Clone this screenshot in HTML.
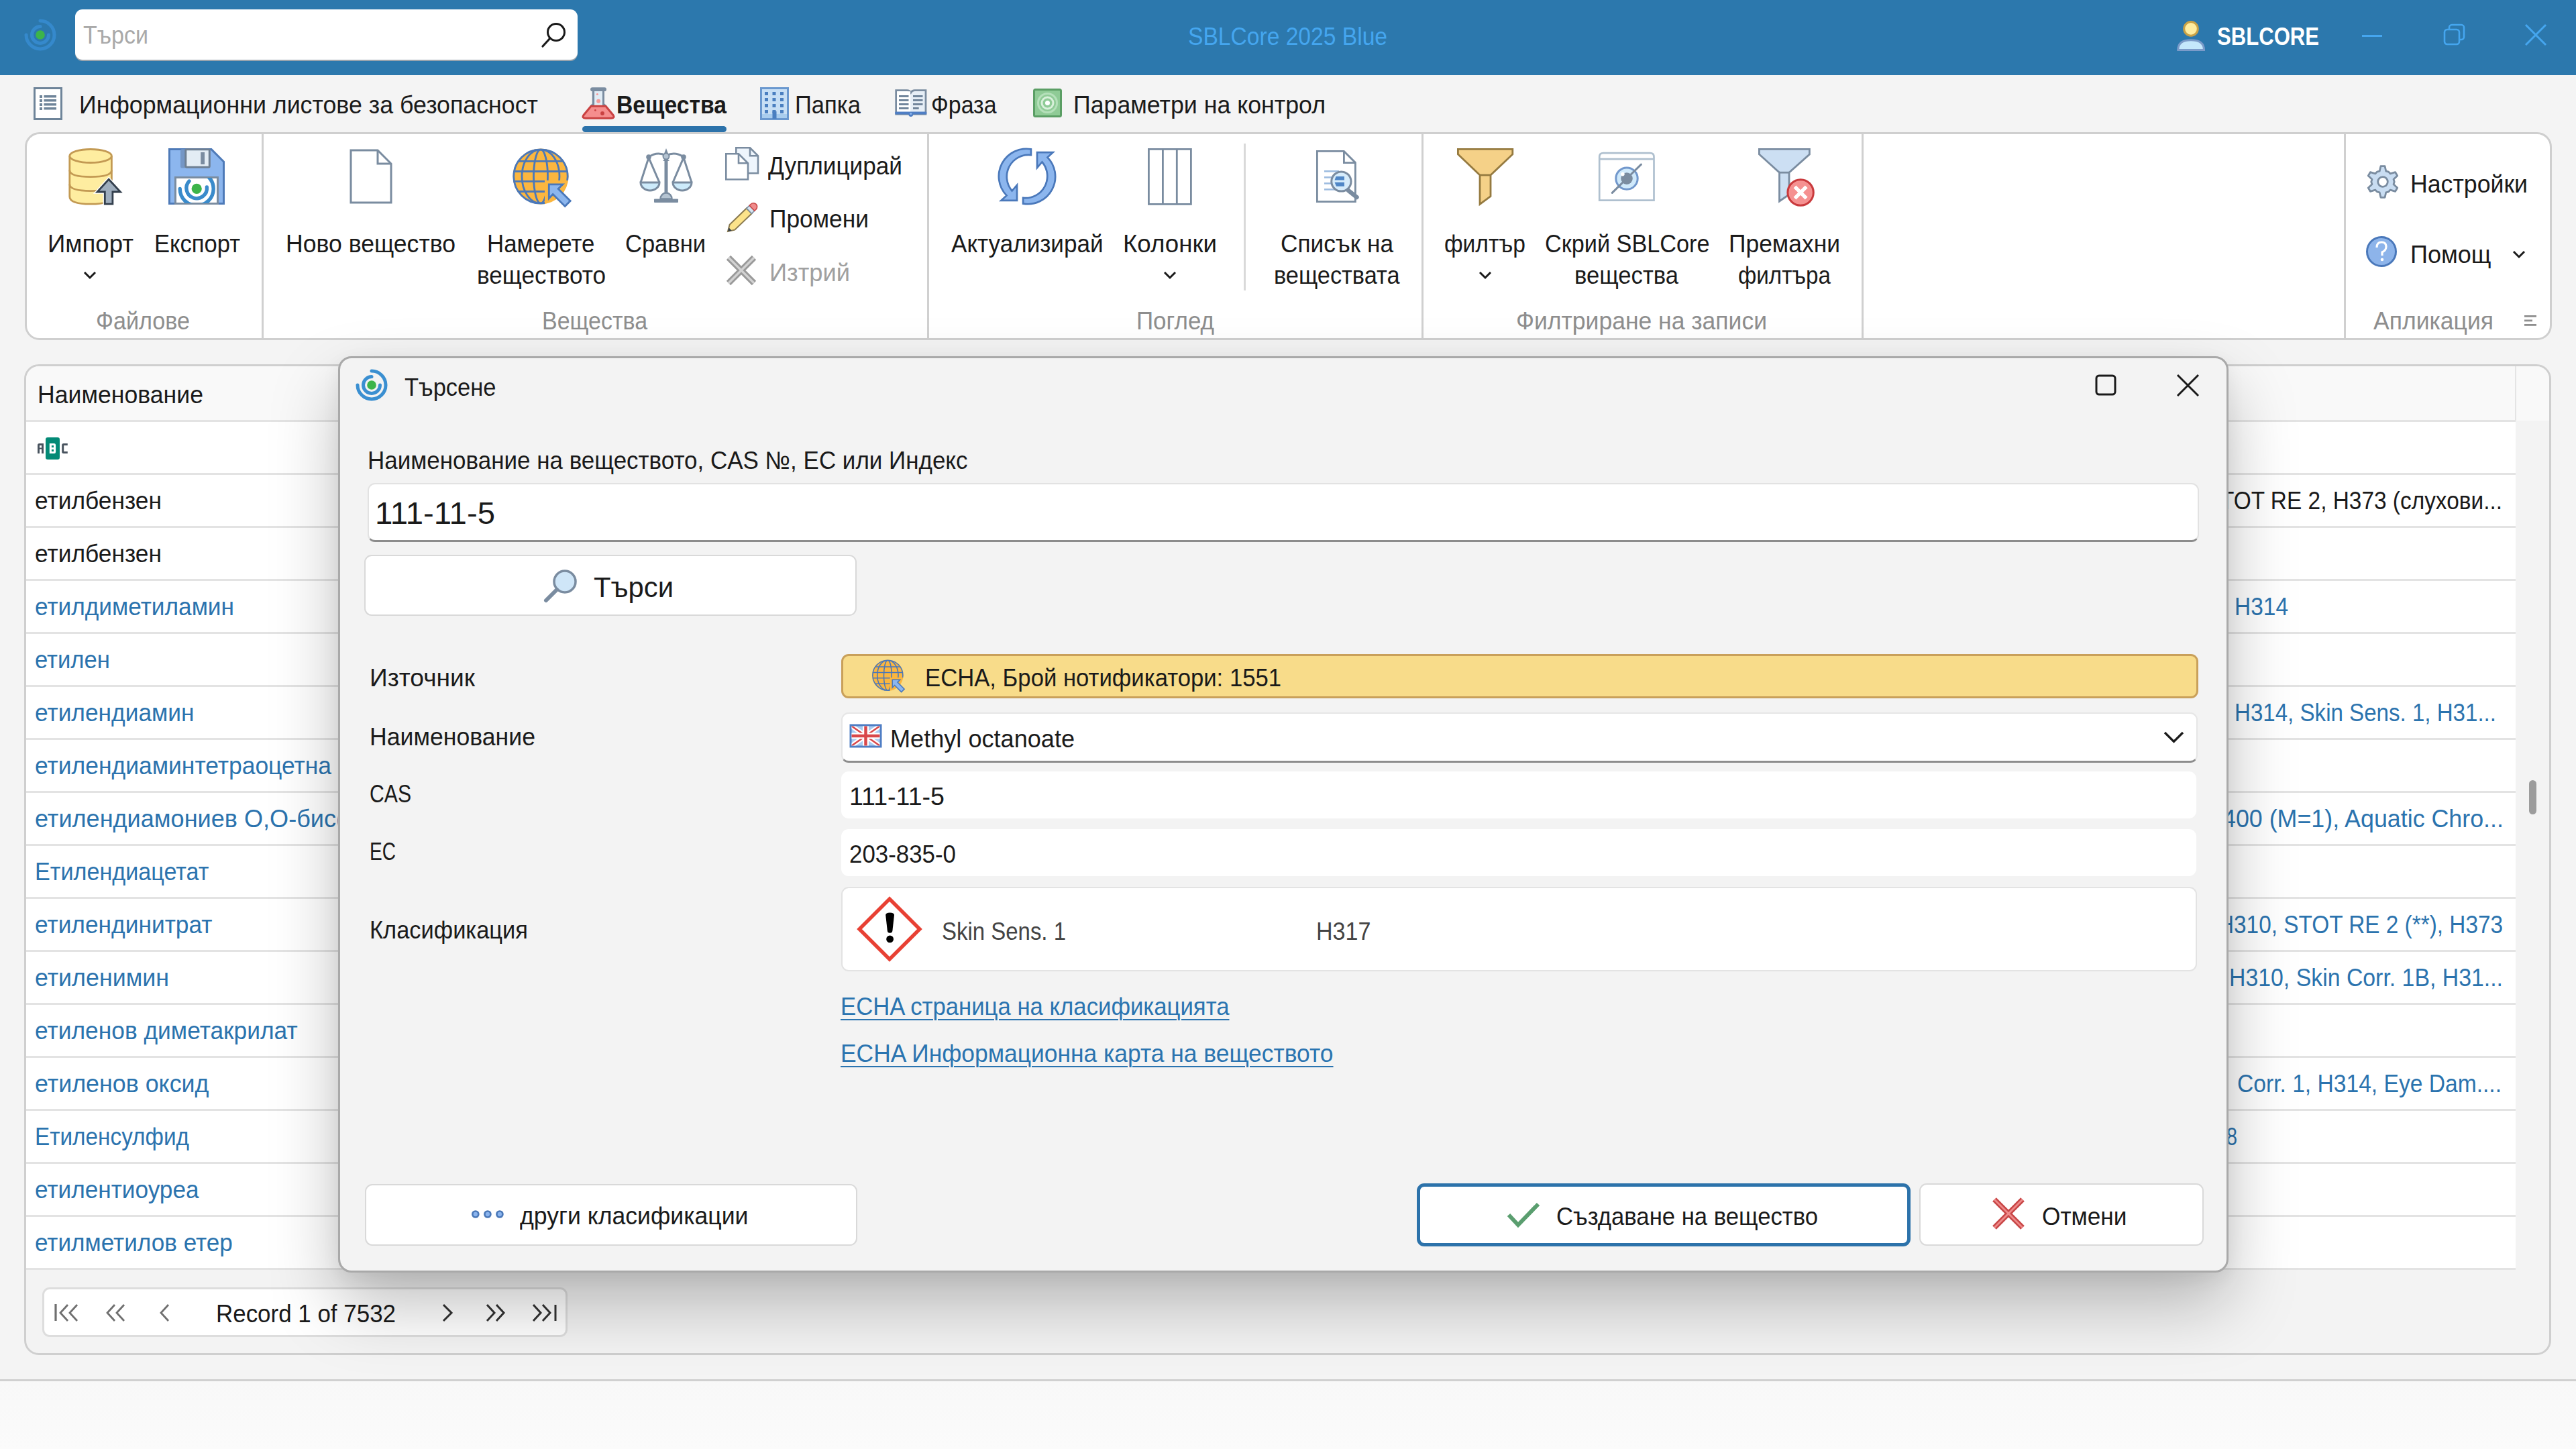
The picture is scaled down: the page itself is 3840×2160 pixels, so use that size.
<!DOCTYPE html>
<html><head><meta charset="utf-8"><style>
html,body{margin:0;padding:0;width:3840px;height:2160px;overflow:hidden;background:#F4F4F4;font-family:"Liberation Sans", sans-serif;}
svg{overflow:visible}
</style></head><body>
<div style="position:absolute;left:0;top:0;width:3840px;height:112px;background:#2C78AD"></div><svg style="position:absolute;left:35.0px;top:27.0px" width="50.0" height="50.0" viewBox="0 0 50 50"><path d="M25,4 A21,21 0 1 1 4,25" fill="none" stroke="#3589CC" stroke-width="5" stroke-linecap="round"/><path d="M37.5,25 A12.5,12.5 0 1 1 25,12.5" fill="none" stroke="#3589CC" stroke-width="5" stroke-linecap="round"/><circle cx="25" cy="25" r="6.8" fill="#3CB44A"/></svg><div style="position:absolute;left:112px;top:14px;width:749px;height:75px;background:#fff;border-radius:11px;box-shadow:0 2px 0 #9aa4ad;"></div><svg style="position:absolute;left:806px;top:32px" width="40" height="40" viewBox="0 0 40 40"><circle cx="23" cy="16" r="12.5" fill="none" stroke="#1a1a1a" stroke-width="3"/><line x1="14" y1="25" x2="3" y2="37" stroke="#1a1a1a" stroke-width="3.2" stroke-linecap="round"/></svg><svg style="position:absolute;left:3230px;top:20px" width="70" height="70" viewBox="0 0 70 70"><circle cx="36" cy="22.9" r="10.3" fill="#FFEDA0" stroke="#C9A247" stroke-width="3"/><path d="M16.7,54.5 Q16.7,39.7 36,39.7 Q55.5,39.7 55.5,54.5 Z" fill="#C5E8FC" stroke="#7B9BC9" stroke-width="3" stroke-linejoin="miter"/></svg><div style="position:absolute;left:3521px;top:52px;width:30px;height:3px;background:#45A6EF"></div><svg style="position:absolute;left:3642px;top:35px" width="33" height="33" viewBox="0 0 33 33"><rect x="2" y="9" width="22" height="22" rx="4" fill="none" stroke="#45A6EF" stroke-width="2.6"/><path d="M9,9 V6 a4,4 0 0 1 4,-4 H27 a4,4 0 0 1 4,4 V20 a4,4 0 0 1 -4,4 H24" fill="none" stroke="#45A6EF" stroke-width="2.6"/></svg><svg style="position:absolute;left:3763px;top:35px" width="34" height="34" viewBox="0 0 34 34"><path d="M2,2 L32,32 M32,2 L2,32" stroke="#45A6EF" stroke-width="3"/></svg><svg style="position:absolute;left:50px;top:130px" width="43" height="49" viewBox="0 0 43 49"><rect x="1.5" y="1.5" width="40" height="46" fill="#fff" stroke="#6E8499" stroke-width="3"/><g fill="#6E8499"><rect x="9" y="12" width="4" height="4"/><rect x="9" y="18" width="4" height="4"/><rect x="9" y="24" width="4" height="4"/><rect x="9" y="30" width="4" height="4"/><rect x="15.5" y="12" width="18.5" height="3.5"/><rect x="15.5" y="18" width="18.5" height="3.5"/><rect x="15.5" y="24" width="18.5" height="3.5"/><rect x="15.5" y="30" width="18.5" height="3.5"/></g></svg><svg style="position:absolute;left:860px;top:122px" width="60" height="60" viewBox="0 0 60 60"><rect x="24.5" y="12" width="15" height="22" fill="#E0ECF5"/><rect x="20.1" y="8.2" width="23.9" height="5.9" rx="2.9" fill="#7A8CA0"/><path d="M22.8,13 V32.6 L19.5,35.5 H26 L26.1,32.6 V13 Z M41,13 V32.6 L44.5,35.5 H38 L38,32.6 V13 Z" fill="#7A8CA0"/><path d="M21,36.3 H43 L54,49.5 Q57,54.2 51,54.2 H13 Q7,54.2 10,49.5 Z" fill="#F58E8E" stroke="#C94141" stroke-width="3" stroke-linejoin="round"/><circle cx="30.4" cy="18.5" r="1.6" fill="#F59A9A"/><circle cx="32.1" cy="28.8" r="3" fill="#F59A9A"/><circle cx="27.4" cy="42.4" r="1.4" fill="#C94141"/><circle cx="38" cy="47" r="2.9" fill="#C94141"/></svg><div style="position:absolute;left:868px;top:188px;width:215px;height:9px;background:#2C72AA;border-radius:5px"></div><svg style="position:absolute;left:1133px;top:130px" width="43" height="49" viewBox="0 0 43 49"><rect x="1.5" y="1.5" width="40" height="46" fill="#C7DFF5" stroke="#6A98CF" stroke-width="3"/><rect x="3" y="40" width="37" height="6" fill="#A9CDEE"/><g fill="#4A7FC0"><rect x="7" y="7" width="5" height="5"/><rect x="7" y="16" width="5" height="5"/><rect x="7" y="25" width="5" height="5"/><rect x="7" y="34" width="5" height="5"/><rect x="18.5" y="7" width="5" height="5"/><rect x="18.5" y="16" width="5" height="5"/><rect x="18.5" y="25" width="5" height="5"/><rect x="18.5" y="34" width="5" height="5"/><rect x="30" y="7" width="5" height="5"/><rect x="30" y="16" width="5" height="5"/><rect x="30" y="25" width="5" height="5"/><rect x="30" y="34" width="5" height="5"/></g><rect x="18.5" y="36" width="6" height="11" fill="#4A7FC0"/></svg><svg style="position:absolute;left:1333px;top:130px" width="50" height="50" viewBox="0 0 50 50"><path d="M2.7,4.7 H19 Q23,4.7 24.8,8 Q26.6,4.7 30.6,4.7 H47 V40 H2.7 Z" fill="#E6EEF6" stroke="#7A8CA0" stroke-width="2.8"/><rect x="4.1" y="6.2" width="20" height="32.5" fill="#fff"/><rect x="1.3" y="36.5" width="47" height="4" rx="1" fill="#4F7EC4"/><circle cx="24.8" cy="40.5" r="3.4" fill="#4F7EC4"/><circle cx="24.8" cy="39.5" r="1.6" fill="#8CB6EE"/><g fill="#6A7F96"><rect x="7" y="12" width="14.5" height="2.8"/><rect x="7" y="18" width="14.5" height="2.8"/><rect x="7" y="24" width="14.5" height="2.8"/><rect x="7" y="30" width="14.5" height="2.8"/><rect x="28" y="12" width="14.5" height="2.8"/><rect x="28" y="18" width="14.5" height="2.8"/><rect x="28" y="24" width="14.5" height="2.8"/><rect x="28" y="30" width="8.7" height="2.8"/></g></svg><svg style="position:absolute;left:1540px;top:132px" width="43" height="43" viewBox="0 0 43 43"><rect x="1.5" y="1.5" width="40" height="40" rx="2" fill="#8FCB96" stroke="#5A9E64" stroke-width="3"/><circle cx="21.5" cy="21.5" r="14" fill="none" stroke="#B5E0BA" stroke-width="3"/><circle cx="21.5" cy="21.5" r="8.5" fill="none" stroke="#D9F0DB" stroke-width="3"/><circle cx="21.5" cy="21.5" r="3.5" fill="#fff"/></svg><div style="position:absolute;left:37px;top:197px;width:3767px;height:310px;background:#fff;border:3px solid #CFCFCF;border-radius:22px;box-sizing:border-box"></div><div style="position:absolute;left:390px;top:200px;width:3px;height:304px;background:#D0D0D0"></div><div style="position:absolute;left:1382px;top:200px;width:3px;height:304px;background:#D0D0D0"></div><div style="position:absolute;left:2119px;top:200px;width:3px;height:304px;background:#D0D0D0"></div><div style="position:absolute;left:2775px;top:200px;width:3px;height:304px;background:#D0D0D0"></div><div style="position:absolute;left:3494px;top:200px;width:3px;height:304px;background:#D0D0D0"></div><div style="position:absolute;left:1854px;top:214px;width:3px;height:219px;background:#D9D9D9"></div><svg style="position:absolute;left:3760px;top:468px" width="24" height="20" viewBox="0 0 24 20"><g fill="#8E8E8E"><rect x="3" y="2" width="18" height="2.8"/><rect x="3" y="8.5" width="12" height="2.8"/><rect x="3" y="15" width="18" height="2.8"/></g></svg><svg style="position:absolute;left:90px;top:210px" width="100" height="100" viewBox="0 0 100 100"><path d="M13.8,22.5 V83 Q13.8,94.2 45,94.2 Q76.4,94.2 76.4,83 V22.5" fill="#FEEDA0" stroke="#C39A53" stroke-width="2.8"/><ellipse cx="45.1" cy="22.5" rx="31.3" ry="10" fill="#FEEDA0" stroke="#C39A53" stroke-width="2.8"/><path d="M13.8,43.6 Q13.8,53.6 45,53.6 Q76.4,53.6 76.4,43.6 M13.8,64.6 Q13.8,74.6 45,74.6 Q76.4,74.6 76.4,64.6" fill="none" stroke="#C39A53" stroke-width="2.8"/><path d="M72.1,57.2 L89.5,76 H77.9 V94.2 H66.3 V76 H55 Z" fill="#9EADBD" stroke="#fff" stroke-width="5.5" stroke-linejoin="miter"/><path d="M72.1,57.2 L89.5,76 H77.9 V94.2 H66.3 V76 H55 Z" fill="#9EADBD" stroke="#333F4D" stroke-width="2.8" stroke-linejoin="miter"/></svg><svg style="position:absolute;left:124.0px;top:403.0px" width="20" height="14.0" viewBox="0 0 20 14.0"><path d="M2,3 L10.0,11.0 L18,3" fill="none" stroke="#1a1a1a" stroke-width="3"/></svg><svg style="position:absolute;left:240px;top:210px" width="100" height="100" viewBox="0 0 100 100"><path d="M12.5,12.5 H75 L93.5,31 V93.5 H12.5 Z" fill="#8CB6EE" stroke="#4E7AB8" stroke-width="3"/><rect x="29" y="12.5" width="8" height="28" rx="2" fill="#7496C5"/><rect x="36.8" y="12.8" width="35.5" height="26.5" rx="1.5" fill="#E3ECF4" stroke="#6E7F92" stroke-width="3"/><rect x="59.2" y="17" width="5.8" height="18" fill="#7A8CA0"/><defs><clipPath id="flc"><rect x="22" y="55" width="62" height="38"/></clipPath></defs><rect x="21.5" y="54.5" width="63" height="39" fill="#fff" stroke="#7A8CA0" stroke-width="3"/><g clip-path="url(#flc)"><path d="M68.4,69 A15.3,15.3 0 1 1 42,60" fill="none" stroke="#3A8BCB" stroke-width="5.4" stroke-linecap="round"/><path d="M53.2,46.4 A25,25 0 1 1 28.2,71.4" fill="none" stroke="#3A8BCB" stroke-width="5.4" stroke-linecap="round"/><circle cx="53.2" cy="71.4" r="7.6" fill="#3CB44A"/></g></svg><svg style="position:absolute;left:521px;top:222px" width="64" height="82" viewBox="0 0 64 82"><path d="M2,2 H42 L62,22 V80 H2 Z" fill="#fff" stroke="#7A8CA0" stroke-width="3"/><path d="M42,2 V22 H62" fill="none" stroke="#7A8CA0" stroke-width="3"/></svg><svg style="position:absolute;left:750px;top:210px" width="110.0" height="110.0" viewBox="0 0 110 110"><defs><clipPath id="gc1"><path d="M0,0 H110 V59 H62 V110 H0 Z"/></clipPath><clipPath id="gk1"><circle cx="56" cy="53" r="40"/></clipPath></defs><circle cx="56" cy="53" r="41.5" fill="#FBB63F"/><g clip-path="url(#gc1)"><circle cx="56" cy="53" r="40.2" fill="none" stroke="#4A78BA" stroke-width="2.8"/><g clip-path="url(#gk1)" stroke="#4A78BA" stroke-width="2.8" fill="none"><ellipse cx="56" cy="53" rx="10.5" ry="40.2"/><ellipse cx="56" cy="53" rx="28" ry="40.2"/><path d="M10,30.4 H102 M10,45.5 H102 M10,60.3 H102 M10,75.5 H102"/></g></g><path d="M68.3,64.9 L88.8,64.9 L82.15,71.55 L100.2,89.6 L92.2,97.5 L74.2,79.5 L68.3,85.8 Z" fill="#8CB6EE" stroke="#4A78BA" stroke-width="2.8" stroke-linejoin="miter"/></svg><svg style="position:absolute;left:940px;top:210px" width="100" height="100" viewBox="0 0 100 100"><g stroke="#7A8CA0" fill="none" stroke-width="3"><path d="M27,24 Q40,15 53,22 Q66,15 79,24"/><path d="M27,25 L15,62 M27,25 L43,62 M79,25 L63,62 M79,25 L91,62"/></g><rect x="50.5" y="27" width="5" height="60" fill="#7A8CA0"/><path d="M48,30 H58 L55,27 H51 Z" fill="#7A8CA0"/><path d="M53,11 L56,19 H50 Z" fill="#7A8CA0"/><circle cx="53" cy="23" r="4.5" fill="#B5C4D2" stroke="#7A8CA0" stroke-width="2"/><circle cx="27" cy="24" r="3.8" fill="#7A8CA0"/><circle cx="79" cy="24" r="3.8" fill="#7A8CA0"/><path d="M15,62 H43 A14,12 0 0 1 15,62 Z" fill="#CDEBFB" stroke="#7A8CA0" stroke-width="3"/><path d="M63,62 H91 A14,12 0 0 1 63,62 Z" fill="#CDEBFB" stroke="#7A8CA0" stroke-width="3"/><path d="M44.5,86.5 A8.5,9 0 0 1 61.5,86.5 Z" fill="#B5C4D2" stroke="#7A8CA0" stroke-width="2.5"/><rect x="35" y="86.5" width="36" height="5.5" rx="1" fill="#7A8CA0"/></svg><svg style="position:absolute;left:1080px;top:218px" width="52" height="52" viewBox="0 0 52 52"><path d="M17.3,2.3 H38 L50,14.3 V40.2 H17.3 Z" fill="#EEF5FC" stroke="#7A8CA0" stroke-width="2.6"/><path d="M38,2.3 V14.3 H50" fill="none" stroke="#7A8CA0" stroke-width="2.6"/><path d="M2.3,11.3 H21 L35,25.3 V49.5 H2.3 Z" fill="#fff" stroke="#7A8CA0" stroke-width="2.6"/><path d="M21,11.3 V25.3 H35" fill="none" stroke="#7A8CA0" stroke-width="2.6"/></svg><svg style="position:absolute;left:1080px;top:300px" width="52" height="50" viewBox="0 0 52 50"><g transform="translate(5,45) rotate(-44)"><path d="M0,0 L9,-5.5 H44 V5.5 H9 Z" fill="#FCE38A" stroke="#8A7A50" stroke-width="2"/><path d="M0,0 L5,-3 V3 Z" fill="#36404A"/><rect x="44" y="-5.5" width="6" height="11" fill="#D6E4F0" stroke="#7A8CA0" stroke-width="1.6"/><path d="M50,-5.5 H53 A5.5,5.5 0 0 1 53,5.5 H50 Z" fill="#F08B8B" stroke="#C94848" stroke-width="1.6"/></g></svg><svg style="position:absolute;left:1080px;top:378px" width="50" height="50" viewBox="0 0 50 50"><path d="M6,6 L44,44 M44,6 L6,44" stroke="#9A9A9A" stroke-width="9"/><path d="M6,6 L44,44 M44,6 L6,44" stroke="#D2D2D2" stroke-width="3.2"/></svg><svg style="position:absolute;left:1489px;top:221px" width="86" height="86" viewBox="0 0 86 86"><path d="M47.9,1.4 A41,41 0 0 0 11.5,70.4 L3.4,77.8 H27 V54.8 L19.6,63.5 A32.5,32.5 0 0 1 47.9,10.06 Z" fill="#8CB6EE" stroke="#4A78BA" stroke-width="2.7" stroke-linejoin="miter"/><path d="M36.1,82.6 A41,41 0 0 0 72.5,13.6 L80.6,6.2 H57 V29.2 L64.4,20.5 A32.5,32.5 0 0 1 36.1,73.94 Z" fill="#8CB6EE" stroke="#4A78BA" stroke-width="2.7" stroke-linejoin="miter"/></svg><svg style="position:absolute;left:1709px;top:219px" width="70" height="88" viewBox="0 0 70 88"><rect x="3.4" y="3.4" width="63" height="82" fill="#fff" stroke="#7A8CA0" stroke-width="2.8"/><line x1="24.4" y1="3" x2="24.4" y2="86" stroke="#7A8CA0" stroke-width="2.8"/><line x1="45.3" y1="3" x2="45.3" y2="86" stroke="#7A8CA0" stroke-width="2.8"/></svg><svg style="position:absolute;left:1734.0px;top:403.0px" width="20" height="14.0" viewBox="0 0 20 14.0"><path d="M2,3 L10.0,11.0 L18,3" fill="none" stroke="#1a1a1a" stroke-width="3"/></svg><svg style="position:absolute;left:1950px;top:210px" width="90" height="100" viewBox="0 0 90 100"><path d="M13.4,15.4 H53.4 L70.4,32.4 V90.6 H13.4 Z" fill="#fff" stroke="#7A8CA0" stroke-width="2.8"/><path d="M53.4,15 V32.7 H70.8" fill="none" stroke="#7A8CA0" stroke-width="2.8"/><g stroke="#9DBCE0" stroke-width="2.6"><line x1="24" y1="45.3" x2="46" y2="45.3"/><line x1="24" y1="54.4" x2="40" y2="54.4"/><line x1="24" y1="63.4" x2="40" y2="63.4"/><line x1="24" y1="72.4" x2="42" y2="72.4"/></g><line x1="60" y1="74" x2="72.5" y2="84" stroke="#7A8CA0" stroke-width="6.5" stroke-linecap="round"/><circle cx="49.4" cy="60.5" r="14.6" fill="#D6ECFB" stroke="#7A8CA0" stroke-width="3"/><path d="M41.5,53 H54 V58.4 H39.5 Z M39.5,61.7 H54 V67.7 H42 Z" fill="#4F86C6"/></svg><svg style="position:absolute;left:2170px;top:219px" width="90" height="90" viewBox="0 0 90 90"><path d="M3.4,3.4 H84.8 V11 L52,42 V73.6 L36,85.4 V42 L3.4,11 Z" fill="#F5D188" stroke="#957A40" stroke-width="2.8" stroke-linejoin="miter"/><line x1="36" y1="42" x2="52" y2="42" stroke="#957A40" stroke-width="2.8"/></svg><svg style="position:absolute;left:2204.0px;top:403.0px" width="20" height="14.0" viewBox="0 0 20 14.0"><path d="M2,3 L10.0,11.0 L18,3" fill="none" stroke="#1a1a1a" stroke-width="3"/></svg><svg style="position:absolute;left:2380px;top:224px" width="92" height="80" viewBox="0 0 92 80"><path d="M4.2,74.6 V10 Q4.2,4.2 10,4.2 H79.7 Q85.5,4.2 85.5,10 V74.6 Z" fill="#fff" stroke="#AFC0CF" stroke-width="2.7"/><line x1="4" y1="13.2" x2="85.7" y2="13.2" stroke="#AFC0CF" stroke-width="2.7"/><circle cx="45" cy="42.1" r="16.2" fill="#CFE9FB" stroke="#7298CC" stroke-width="3"/><circle cx="45" cy="42.1" r="8.8" fill="#7A8CA0"/><circle cx="38.9" cy="35.6" r="2.8" fill="#fff"/><line x1="23.3" y1="63.4" x2="66.4" y2="21.1" stroke="#7A8CA0" stroke-width="3" stroke-linecap="round"/></svg><svg style="position:absolute;left:2615px;top:215px" width="100" height="100" viewBox="0 0 100 100"><path d="M7.4,7.4 H82.4 V15 L52,42.2 V75 L37.5,85 V42.2 L7.4,15 Z" fill="#CCDFF3" stroke="#7A8CA0" stroke-width="2.8" stroke-linejoin="miter"/><line x1="37" y1="42.2" x2="52.5" y2="42.2" stroke="#7A8CA0" stroke-width="2.8"/><circle cx="69.1" cy="72" r="19.2" fill="#F59191" stroke="#C9393C" stroke-width="3"/><path d="M60.5,63.4 L77.7,80.6 M77.7,63.4 L60.5,80.6" stroke="#fff" stroke-width="5.5"/></svg><svg style="position:absolute;left:3528px;top:247px" width="48" height="48" viewBox="0 0 48 48"><path d="M19.18,8.22 L20.93,0.70 L27.07,0.70 L28.82,8.22 L32.60,9.10 L35.25,11.93 L42.64,9.69 L45.71,15.01 L40.08,20.29 L41.20,24.00 L40.08,27.71 L45.71,32.99 L42.64,38.31 L35.25,36.07 L32.60,38.90 L28.82,39.78 L27.07,47.30 L20.93,47.30 L19.18,39.78 L15.40,38.90 L12.75,36.07 L5.36,38.31 L2.29,32.99 L7.92,27.71 L6.80,24.00 L7.92,20.29 L2.29,15.01 L5.36,9.69 L12.75,11.93 L15.40,9.10 Z" fill="#C9DDF2" stroke="#7A8CA0" stroke-width="2.8" stroke-linejoin="round"/><circle cx="24" cy="24" r="7.3" fill="#fff" stroke="#7A8CA0" stroke-width="2.8"/></svg><svg style="position:absolute;left:3526px;top:351px" width="48" height="48" viewBox="0 0 48 48"><circle cx="24" cy="24" r="21.5" fill="#8DB4EA" stroke="#4A78BA" stroke-width="3"/><path d="M17,18 Q17,10 24,10 Q31,10 31,17 Q31,22 25,25 V30" fill="none" stroke="#fff" stroke-width="3.2"/><circle cx="25" cy="36" r="2.3" fill="#fff"/></svg><svg style="position:absolute;left:3745.0px;top:372.0px" width="20" height="14.0" viewBox="0 0 20 14.0"><path d="M2,3 L10.0,11.0 L18,3" fill="none" stroke="#1a1a1a" stroke-width="3"/></svg><div style="position:absolute;left:124.0px;top:34.0px;font-size:37px;line-height:1;font-weight:400;color:#a9a9a9;white-space:pre;transform:scaleX(0.9196);transform-origin:left top;">Търси</div><div style="position:absolute;left:1771.0px;top:35.5px;font-size:37px;line-height:1;font-weight:400;color:#45A6EF;white-space:pre;transform:scaleX(0.9081);transform-origin:left top;">SBLCore 2025 Blue</div><div style="position:absolute;left:3305.0px;top:35.5px;font-size:37px;line-height:1;font-weight:700;color:#ffffff;white-space:pre;transform:scaleX(0.8402);transform-origin:left top;">SBLCORE</div><div style="position:absolute;left:118.0px;top:137.6px;font-size:37px;line-height:1;font-weight:400;color:#1a1a1a;white-space:pre;transform:scaleX(0.9662);transform-origin:left top;">Информационни листове за безопасност</div><div style="position:absolute;left:918.5px;top:137.6px;font-size:37px;line-height:1;font-weight:700;color:#1a1a1a;white-space:pre;transform:scaleX(0.9104);transform-origin:left top;">Вещества</div><div style="position:absolute;left:1185.0px;top:137.6px;font-size:37px;line-height:1;font-weight:400;color:#1a1a1a;white-space:pre;transform:scaleX(0.9351);transform-origin:left top;">Папка</div><div style="position:absolute;left:1388.0px;top:137.6px;font-size:37px;line-height:1;font-weight:400;color:#1a1a1a;white-space:pre;transform:scaleX(0.9162);transform-origin:left top;">Фраза</div><div style="position:absolute;left:1600.0px;top:137.6px;font-size:37px;line-height:1;font-weight:400;color:#1a1a1a;white-space:pre;transform:scaleX(0.9657);transform-origin:left top;">Параметри на контрол</div><div style="position:absolute;left:143.0px;top:459.6px;font-size:37px;line-height:1;font-weight:400;color:#8E8E8E;white-space:pre;transform:scaleX(0.9224);transform-origin:left top;">Файлове</div><div style="position:absolute;left:808.0px;top:459.6px;font-size:37px;line-height:1;font-weight:400;color:#8E8E8E;white-space:pre;transform:scaleX(0.9175);transform-origin:left top;">Вещества</div><div style="position:absolute;left:1694.0px;top:459.6px;font-size:37px;line-height:1;font-weight:400;color:#8E8E8E;white-space:pre;transform:scaleX(0.9445);transform-origin:left top;">Поглед</div><div style="position:absolute;left:2260.0px;top:459.6px;font-size:37px;line-height:1;font-weight:400;color:#8E8E8E;white-space:pre;transform:scaleX(0.9596);transform-origin:left top;">Филтриране на записи</div><div style="position:absolute;left:3538.0px;top:459.6px;font-size:37px;line-height:1;font-weight:400;color:#8E8E8E;white-space:pre;transform:scaleX(0.9600);transform-origin:left top;">Апликация</div><div style="position:absolute;left:71.0px;top:344.6px;font-size:37px;line-height:1;font-weight:400;color:#1a1a1a;white-space:pre;transform:scaleX(0.9895);transform-origin:left top;">Импорт</div><div style="position:absolute;left:229.6px;top:344.6px;font-size:37px;line-height:1;font-weight:400;color:#1a1a1a;white-space:pre;transform:scaleX(0.9336);transform-origin:left top;">Експорт</div><div style="position:absolute;left:426.0px;top:344.6px;font-size:37px;line-height:1;font-weight:400;color:#1a1a1a;white-space:pre;transform:scaleX(0.9616);transform-origin:left top;">Ново вещество</div><div style="position:absolute;left:725.5px;top:344.6px;font-size:37px;line-height:1;font-weight:400;color:#1a1a1a;white-space:pre;transform:scaleX(0.9421);transform-origin:left top;">Намерете</div><div style="position:absolute;left:710.6px;top:391.6px;font-size:37px;line-height:1;font-weight:400;color:#1a1a1a;white-space:pre;transform:scaleX(0.9506);transform-origin:left top;">веществото</div><div style="position:absolute;left:932.0px;top:344.6px;font-size:37px;line-height:1;font-weight:400;color:#1a1a1a;white-space:pre;transform:scaleX(0.9328);transform-origin:left top;">Сравни</div><div style="position:absolute;left:1145.0px;top:228.6px;font-size:37px;line-height:1;font-weight:400;color:#1a1a1a;white-space:pre;transform:scaleX(0.9508);transform-origin:left top;">Дуплицирай</div><div style="position:absolute;left:1147.0px;top:307.6px;font-size:37px;line-height:1;font-weight:400;color:#1a1a1a;white-space:pre;transform:scaleX(0.9556);transform-origin:left top;">Промени</div><div style="position:absolute;left:1147.0px;top:387.6px;font-size:37px;line-height:1;font-weight:400;color:#A0A0A0;white-space:pre;transform:scaleX(0.9802);transform-origin:left top;">Изтрий</div><div style="position:absolute;left:1417.6px;top:344.6px;font-size:37px;line-height:1;font-weight:400;color:#1a1a1a;white-space:pre;transform:scaleX(0.9476);transform-origin:left top;">Актуализирай</div><div style="position:absolute;left:1674.0px;top:344.6px;font-size:37px;line-height:1;font-weight:400;color:#1a1a1a;white-space:pre;transform:scaleX(0.9915);transform-origin:left top;">Колонки</div><div style="position:absolute;left:1908.6px;top:344.6px;font-size:37px;line-height:1;font-weight:400;color:#1a1a1a;white-space:pre;transform:scaleX(0.9517);transform-origin:left top;">Списък на</div><div style="position:absolute;left:1898.6px;top:391.6px;font-size:37px;line-height:1;font-weight:400;color:#1a1a1a;white-space:pre;transform:scaleX(0.9283);transform-origin:left top;">веществата</div><div style="position:absolute;left:2153.0px;top:344.6px;font-size:37px;line-height:1;font-weight:400;color:#1a1a1a;white-space:pre;transform:scaleX(0.9073);transform-origin:left top;">филтър</div><div style="position:absolute;left:2302.6px;top:344.6px;font-size:37px;line-height:1;font-weight:400;color:#1a1a1a;white-space:pre;transform:scaleX(0.9256);transform-origin:left top;">Скрий SBLCore</div><div style="position:absolute;left:2347.0px;top:391.6px;font-size:37px;line-height:1;font-weight:400;color:#1a1a1a;white-space:pre;transform:scaleX(0.9355);transform-origin:left top;">вещества</div><div style="position:absolute;left:2577.0px;top:344.6px;font-size:37px;line-height:1;font-weight:400;color:#1a1a1a;white-space:pre;transform:scaleX(0.9575);transform-origin:left top;">Премахни</div><div style="position:absolute;left:2591.0px;top:391.6px;font-size:37px;line-height:1;font-weight:400;color:#1a1a1a;white-space:pre;transform:scaleX(0.8965);transform-origin:left top;">филтъра</div><div style="position:absolute;left:3592.5px;top:255.6px;font-size:37px;line-height:1;font-weight:400;color:#1a1a1a;white-space:pre;transform:scaleX(0.9645);transform-origin:left top;">Настройки</div><div style="position:absolute;left:3592.5px;top:361.1px;font-size:37px;line-height:1;font-weight:400;color:#1a1a1a;white-space:pre;transform:scaleX(0.9746);transform-origin:left top;">Помощ</div><div style="position:absolute;left:36px;top:543px;width:3767px;height:1477px;background:#F3F3F3;border:3px solid #CFCFCF;border-radius:22px;box-sizing:border-box;overflow:hidden"></div><div style="position:absolute;left:39px;top:546px;width:3761px;height:81px;background:#F9F9F9;border-radius:19px 19px 0 0"></div><div style="position:absolute;left:3749px;top:546px;width:2px;height:81px;background:#E4E4E4"></div><div style="position:absolute;left:39px;top:627px;width:3711px;height:1266px;background:#fff"></div><div style="position:absolute;left:39px;top:626px;width:3711px;height:3px;background:#E3E3E3"></div><div style="position:absolute;left:39px;top:705px;width:3711px;height:3px;background:#E3E3E3"></div><div style="position:absolute;left:39px;top:784px;width:3711px;height:3px;background:#E3E3E3"></div><div style="position:absolute;left:39px;top:863px;width:3711px;height:3px;background:#E3E3E3"></div><div style="position:absolute;left:39px;top:942px;width:3711px;height:3px;background:#E3E3E3"></div><div style="position:absolute;left:39px;top:1021px;width:3711px;height:3px;background:#E3E3E3"></div><div style="position:absolute;left:39px;top:1100px;width:3711px;height:3px;background:#E3E3E3"></div><div style="position:absolute;left:39px;top:1179px;width:3711px;height:3px;background:#E3E3E3"></div><div style="position:absolute;left:39px;top:1258px;width:3711px;height:3px;background:#E3E3E3"></div><div style="position:absolute;left:39px;top:1337px;width:3711px;height:3px;background:#E3E3E3"></div><div style="position:absolute;left:39px;top:1416px;width:3711px;height:3px;background:#E3E3E3"></div><div style="position:absolute;left:39px;top:1495px;width:3711px;height:3px;background:#E3E3E3"></div><div style="position:absolute;left:39px;top:1574px;width:3711px;height:3px;background:#E3E3E3"></div><div style="position:absolute;left:39px;top:1653px;width:3711px;height:3px;background:#E3E3E3"></div><div style="position:absolute;left:39px;top:1732px;width:3711px;height:3px;background:#E3E3E3"></div><div style="position:absolute;left:39px;top:1811px;width:3711px;height:3px;background:#E3E3E3"></div><div style="position:absolute;left:39px;top:1890px;width:3711px;height:3px;background:#E3E3E3"></div><svg style="position:absolute;left:50px;top:645px" width="60" height="47" viewBox="0 0 60 47"><path fill-rule="evenodd" fill="#48535E" d="M6,31 V18.5 Q6,16 8.5,16 H15 V31 H12 V24.6 H9 V31 Z M9,19 H12 V22.4 H9 Z"/><rect x="18" y="7" width="21" height="33" rx="3.2" fill="#038A76"/><path fill-rule="evenodd" fill="#fff" d="M23.8,16 H31 Q33.1,16 33.1,18.5 V28.5 Q33.1,31 31,31 H23.8 Z M26.9,19.1 H30 V21.9 H26.9 Z M26.9,25.1 H30 V27.9 H26.9 Z"/><path fill="#48535E" d="M42.2,28.5 V18.5 Q42.2,16 44.7,16 H50.8 V19 H45.2 V28 H50.8 V31 H44.7 Q42.2,31 42.2,28.5 Z"/></svg><div style="position:absolute;left:3770px;top:1163px;width:11px;height:51px;background:#9C9C9C;border-radius:6px"></div><div style="position:absolute;left:63px;top:1919px;width:783px;height:74px;background:#fff;border:3px solid #DDDDDD;border-radius:11px;box-sizing:border-box"></div><svg style="position:absolute;left:80px;top:1943px" width="40" height="28" viewBox="0 0 40 28"><line x1="3" y1="1" x2="3" y2="26" stroke="#707070" stroke-width="3.2"/><path d="M21,2 L10,14 L21,26 M35,2 L24,14 L35,26" fill="none" stroke="#707070" stroke-width="2.8"/></svg><svg style="position:absolute;left:156px;top:1943px" width="34" height="28" viewBox="0 0 34 28"><path d="M15,2 L4,14 L15,26 M29,2 L18,14 L29,26" fill="none" stroke="#707070" stroke-width="2.8"/></svg><svg style="position:absolute;left:234px;top:1943px" width="22" height="28" viewBox="0 0 22 28"><path d="M17,2 L6,14 L17,26" fill="none" stroke="#707070" stroke-width="2.8"/></svg><svg style="position:absolute;left:656px;top:1943px" width="22" height="28" viewBox="0 0 22 28"><path d="M5,2 L17,14 L5,26" fill="none" stroke="#333" stroke-width="3"/></svg><svg style="position:absolute;left:723px;top:1943px" width="34" height="28" viewBox="0 0 34 28"><path d="M3,2 L14,14 L3,26 M17,2 L28,14 L17,26" fill="none" stroke="#333" stroke-width="3"/></svg><svg style="position:absolute;left:792px;top:1943px" width="40" height="28" viewBox="0 0 40 28"><path d="M3,2 L14,14 L3,26 M17,2 L28,14 L17,26" fill="none" stroke="#333" stroke-width="3"/><line x1="36" y1="2" x2="36" y2="26" stroke="#333" stroke-width="3"/></svg><div style="position:absolute;left:56.0px;top:569.5px;font-size:37px;line-height:1;font-weight:400;color:#1a1a1a;white-space:pre;transform:scaleX(0.9630);transform-origin:left top;">Наименование</div><div style="position:absolute;left:52.0px;top:728.0px;font-size:37px;line-height:1;font-weight:400;color:#1a1a1a;white-space:pre;transform:scaleX(0.9550);transform-origin:left top;">етилбензен</div><div style="position:absolute;left:52.0px;top:807.0px;font-size:37px;line-height:1;font-weight:400;color:#1a1a1a;white-space:pre;transform:scaleX(0.9550);transform-origin:left top;">етилбензен</div><div style="position:absolute;left:52.0px;top:886.0px;font-size:37px;line-height:1;font-weight:400;color:#2B73AE;white-space:pre;transform:scaleX(0.9522);transform-origin:left top;">етилдиметиламин</div><div style="position:absolute;left:52.0px;top:965.0px;font-size:37px;line-height:1;font-weight:400;color:#2B73AE;white-space:pre;transform:scaleX(0.9366);transform-origin:left top;">етилен</div><div style="position:absolute;left:52.0px;top:1044.0px;font-size:37px;line-height:1;font-weight:400;color:#2B73AE;white-space:pre;transform:scaleX(0.9541);transform-origin:left top;">етилендиамин</div><div style="position:absolute;left:52.0px;top:1123.0px;font-size:37px;line-height:1;font-weight:400;color:#2B73AE;white-space:pre;transform:scaleX(0.9576);transform-origin:left top;">етилендиаминтетраоцетна</div><div style="position:absolute;left:52.0px;top:1202.0px;font-size:37px;line-height:1;font-weight:400;color:#2B73AE;white-space:pre;transform:scaleX(0.9749);transform-origin:left top;">етилендиамониев О,О-бис(</div><div style="position:absolute;left:52.0px;top:1281.0px;font-size:37px;line-height:1;font-weight:400;color:#2B73AE;white-space:pre;transform:scaleX(0.9231);transform-origin:left top;">Етилендиацетат</div><div style="position:absolute;left:52.0px;top:1360.0px;font-size:37px;line-height:1;font-weight:400;color:#2B73AE;white-space:pre;transform:scaleX(0.9543);transform-origin:left top;">етилендинитрат</div><div style="position:absolute;left:52.0px;top:1439.0px;font-size:37px;line-height:1;font-weight:400;color:#2B73AE;white-space:pre;transform:scaleX(0.9672);transform-origin:left top;">етиленимин</div><div style="position:absolute;left:52.0px;top:1518.0px;font-size:37px;line-height:1;font-weight:400;color:#2B73AE;white-space:pre;transform:scaleX(0.9554);transform-origin:left top;">етиленов диметакрилат</div><div style="position:absolute;left:52.0px;top:1597.0px;font-size:37px;line-height:1;font-weight:400;color:#2B73AE;white-space:pre;transform:scaleX(0.9682);transform-origin:left top;">етиленов оксид</div><div style="position:absolute;left:52.0px;top:1676.0px;font-size:37px;line-height:1;font-weight:400;color:#2B73AE;white-space:pre;transform:scaleX(0.9006);transform-origin:left top;">Етиленсулфид</div><div style="position:absolute;left:52.0px;top:1755.0px;font-size:37px;line-height:1;font-weight:400;color:#2B73AE;white-space:pre;transform:scaleX(0.9511);transform-origin:left top;">етилентиоуреа</div><div style="position:absolute;left:52.0px;top:1834.0px;font-size:37px;line-height:1;font-weight:400;color:#2B73AE;white-space:pre;transform:scaleX(0.9494);transform-origin:left top;">етилметилов етер</div><div style="position:absolute;left:3310.0px;top:728.0px;font-size:37px;line-height:1;font-weight:400;color:#1a1a1a;white-space:pre;transform:scaleX(0.9028);transform-origin:left top;">TOT RE 2, H373 (слухови...</div><div style="position:absolute;left:3331.0px;top:886.0px;font-size:37px;line-height:1;font-weight:400;color:#2B73AE;white-space:pre;transform:scaleX(0.9044);transform-origin:left top;">H314</div><div style="position:absolute;left:3331.0px;top:1044.0px;font-size:37px;line-height:1;font-weight:400;color:#2B73AE;white-space:pre;transform:scaleX(0.8945);transform-origin:left top;">H314, Skin Sens. 1, H31...</div><div style="position:absolute;left:3313.0px;top:1202.0px;font-size:37px;line-height:1;font-weight:400;color:#2B73AE;white-space:pre;transform:scaleX(0.9678);transform-origin:left top;">400 (M=1), Aquatic Chro...</div><div style="position:absolute;left:3306.0px;top:1360.0px;font-size:37px;line-height:1;font-weight:400;color:#2B73AE;white-space:pre;transform:scaleX(0.9012);transform-origin:left top;">H310, STOT RE 2 (**), H373</div><div style="position:absolute;left:3323.0px;top:1439.0px;font-size:37px;line-height:1;font-weight:400;color:#2B73AE;white-space:pre;transform:scaleX(0.9143);transform-origin:left top;">H310, Skin Corr. 1B, H31...</div><div style="position:absolute;left:3335.0px;top:1597.0px;font-size:37px;line-height:1;font-weight:400;color:#2B73AE;white-space:pre;transform:scaleX(0.9081);transform-origin:left top;">Corr. 1, H314, Eye Dam....</div><div style="position:absolute;left:3303.0px;top:1597.0px;font-size:37px;line-height:1;font-weight:400;color:#2B73AE;white-space:pre;transform:scaleX(0.9233);transform-origin:left top;">n</div><div style="position:absolute;left:3319.0px;top:1676.0px;font-size:37px;line-height:1;font-weight:400;color:#2B73AE;white-space:pre;transform:scaleX(0.7775);transform-origin:left top;">8</div><div style="position:absolute;left:322.0px;top:1940.0px;font-size:37px;line-height:1;font-weight:400;color:#1a1a1a;white-space:pre;transform:scaleX(0.9441);transform-origin:left top;">Record 1 of 7532</div><div style="position:absolute;left:0px;top:2056px;width:3840px;height:3px;background:#D0D0D0"></div><div style="position:absolute;left:0px;top:2059px;width:3840px;height:101px;background:linear-gradient(#F8F8F8,#FBFBFB)"></div><div style="position:absolute;left:504px;top:531px;width:2818px;height:1366px;background:#F3F3F3;border:3px solid #A9A9A9;border-radius:20px;box-sizing:border-box;box-shadow:0 48px 100px rgba(0,0,0,0.25), 0 8px 28px rgba(0,0,0,0.06)"></div><svg style="position:absolute;left:529.0px;top:549.0px" width="50.0" height="50.0" viewBox="0 0 50 50"><path d="M25,4 A21,21 0 1 1 4,25" fill="none" stroke="#3A8FD1" stroke-width="5" stroke-linecap="round"/><path d="M37.5,25 A12.5,12.5 0 1 1 25,12.5" fill="none" stroke="#3A8FD1" stroke-width="5" stroke-linecap="round"/><circle cx="25" cy="25" r="6.8" fill="#3CB44A"/></svg><svg style="position:absolute;left:3123px;top:558px" width="34" height="33" viewBox="0 0 34 33"><rect x="2" y="2" width="28" height="28" rx="4" fill="none" stroke="#1a1a1a" stroke-width="3"/></svg><svg style="position:absolute;left:3244px;top:557px" width="35" height="35" viewBox="0 0 35 35"><path d="M2,2 L33,33 M33,2 L2,33" stroke="#1a1a1a" stroke-width="3"/></svg><div style="position:absolute;left:548px;top:720px;width:2730px;height:88px;background:#fff;border:2px solid #E2E2E2;border-bottom:3px solid #8C8C8C;border-radius:11px;box-sizing:border-box"></div><div style="position:absolute;left:543px;top:827px;width:734px;height:91px;background:#fff;border:2px solid #D9D9D9;border-radius:11px;box-sizing:border-box"></div><svg style="position:absolute;left:810px;top:847px" width="52" height="52" viewBox="0 0 52 52"><circle cx="32" cy="20" r="16" fill="#CFE6F8" stroke="#7A8CA0" stroke-width="3.5"/><line x1="20" y1="32" x2="4" y2="48" stroke="#7A8CA0" stroke-width="6" stroke-linecap="round"/></svg><div style="position:absolute;left:1254px;top:975px;width:2023px;height:66px;background:#F8DC8A;border:3px solid #C9A05A;border-radius:11px;box-sizing:border-box"></div><svg style="position:absolute;left:1292px;top:977px" width="61.6" height="61.6" viewBox="0 0 110 110"><defs><clipPath id="gc2"><path d="M0,0 H110 V59 H62 V110 H0 Z"/></clipPath><clipPath id="gk2"><circle cx="56" cy="53" r="40"/></clipPath></defs><circle cx="56" cy="53" r="41.5" fill="#FBB63F"/><g clip-path="url(#gc2)"><circle cx="56" cy="53" r="40.2" fill="none" stroke="#4A78BA" stroke-width="2.8"/><g clip-path="url(#gk2)" stroke="#4A78BA" stroke-width="2.8" fill="none"><ellipse cx="56" cy="53" rx="10.5" ry="40.2"/><ellipse cx="56" cy="53" rx="28" ry="40.2"/><path d="M10,30.4 H102 M10,45.5 H102 M10,60.3 H102 M10,75.5 H102"/></g></g><path d="M68.3,64.9 L88.8,64.9 L82.15,71.55 L100.2,89.6 L92.2,97.5 L74.2,79.5 L68.3,85.8 Z" fill="#8CB6EE" stroke="#4A78BA" stroke-width="2.8" stroke-linejoin="miter"/></svg><div style="position:absolute;left:1254px;top:1062px;width:2022px;height:75px;background:#fff;border:2px solid #E6E6E6;border-bottom:3px solid #8C8C8C;border-radius:11px;box-sizing:border-box"></div><svg style="position:absolute;left:1266px;top:1079px" width="50" height="38" viewBox="0 0 50 38"><defs><clipPath id="flg"><rect x="3.5" y="3.5" width="42" height="29"/></clipPath></defs><rect x="2" y="2" width="45" height="32" fill="#A9CBF2" stroke="#4F7EC4" stroke-width="3"/><g clip-path="url(#flg)"><path d="M3,3 L46,33 M46,3 L3,33" stroke="#fff" stroke-width="7"/><path d="M3,3 L46,33 M46,3 L3,33" stroke="#D9474A" stroke-width="2.5"/><path d="M24.5,3 V33 M3,18 H46" stroke="#fff" stroke-width="9"/><path d="M24.5,3 V33 M3,18 H46" stroke="#D9474A" stroke-width="4.5"/></g></svg><svg style="position:absolute;left:3224.5px;top:1089.25px" width="31" height="19.5" viewBox="0 0 31 19.5"><path d="M2,3 L15.5,16.5 L29,3" fill="none" stroke="#1a1a1a" stroke-width="3.2"/></svg><div style="position:absolute;left:1254px;top:1150px;width:2020px;height:70px;background:#fff;border-radius:11px"></div><div style="position:absolute;left:1254px;top:1236px;width:2020px;height:70px;background:#fff;border-radius:11px"></div><div style="position:absolute;left:1254px;top:1322px;width:2021px;height:126px;background:#fff;border:2px solid #E3E3E3;border-radius:11px;box-sizing:border-box"></div><svg style="position:absolute;left:1277px;top:1336px" width="98" height="98" viewBox="0 0 98 98"><path d="M49,4 L94,49 L49,94 L4,49 Z" fill="#fff" stroke="#E84134" stroke-width="5.4" stroke-linejoin="miter"/><path d="M43.2,28 Q43.2,24.4 49.6,24.4 Q56,24.4 56,28 L53.4,51.5 Q53,54.8 49.6,54.8 Q46.2,54.8 45.8,51.5 Z" fill="#000"/><circle cx="49.6" cy="63.9" r="5.4" fill="#000"/></svg><div style="position:absolute;left:544px;top:1765px;width:734px;height:92px;background:#fff;border:2px solid #D9D9D9;border-radius:11px;box-sizing:border-box"></div><svg style="position:absolute;left:700px;top:1799px" width="54" height="22" viewBox="0 0 54 22"><g fill="#8AB4EE" stroke="#4A78B8" stroke-width="2.7"><circle cx="8.8" cy="11" r="4.5"/><circle cx="26.9" cy="11" r="4.5"/><circle cx="44.9" cy="11" r="4.5"/></g></svg><div style="position:absolute;left:2112px;top:1764px;width:736px;height:94px;background:#fff;border:5px solid #2C72AA;border-radius:11px;box-sizing:border-box"></div><svg style="position:absolute;left:2246px;top:1791px" width="50" height="40" viewBox="0 0 50 40"><path d="M3,20 L17,35 L47,4" fill="none" stroke="#5A9E6F" stroke-width="6"/></svg><div style="position:absolute;left:2861px;top:1764px;width:424px;height:93px;background:#fff;border:2px solid #D9D9D9;border-radius:11px;box-sizing:border-box"></div><svg style="position:absolute;left:2969px;top:1784px" width="51" height="50" viewBox="0 0 51 50"><path d="M4,4 L46,46 M46,4 L4,46" stroke="#C94848" stroke-width="8"/><path d="M4,4 L46,46 M46,4 L4,46" stroke="#F08B8B" stroke-width="2.5"/></svg><div style="position:absolute;left:603.0px;top:558.5px;font-size:37px;line-height:1;font-weight:400;color:#1a1a1a;white-space:pre;transform:scaleX(0.9323);transform-origin:left top;">Търсене</div><div style="position:absolute;left:548.0px;top:667.5px;font-size:37px;line-height:1;font-weight:400;color:#1a1a1a;white-space:pre;transform:scaleX(0.9452);transform-origin:left top;">Наименование на веществото, CAS №, EC или Индекс</div><div style="position:absolute;left:559.0px;top:741.9px;font-size:46px;line-height:1;font-weight:400;color:#1a1a1a;white-space:pre;transform:scaleX(1.0293);transform-origin:left top;">111-11-5</div><div style="position:absolute;left:884.5px;top:853.5px;font-size:43px;line-height:1;font-weight:400;color:#1a1a1a;white-space:pre;transform:scaleX(0.9708);transform-origin:left top;">Търси</div><div style="position:absolute;left:551.0px;top:991.5px;font-size:37px;line-height:1;font-weight:400;color:#1a1a1a;white-space:pre;transform:scaleX(1.0037);transform-origin:left top;">Източник</div><div style="position:absolute;left:1379.0px;top:991.5px;font-size:37px;line-height:1;font-weight:400;color:#1a1a1a;white-space:pre;transform:scaleX(0.9371);transform-origin:left top;">ECHA, Брой нотификатори: 1551</div><div style="position:absolute;left:551.0px;top:1079.5px;font-size:37px;line-height:1;font-weight:400;color:#1a1a1a;white-space:pre;transform:scaleX(0.9630);transform-origin:left top;">Наименование</div><div style="position:absolute;left:1327.0px;top:1083.0px;font-size:37px;line-height:1;font-weight:400;color:#1a1a1a;white-space:pre;transform:scaleX(0.9759);transform-origin:left top;">Methyl octanoate</div><div style="position:absolute;left:551.0px;top:1165.0px;font-size:37px;line-height:1;font-weight:400;color:#1a1a1a;white-space:pre;transform:scaleX(0.8150);transform-origin:left top;">CAS</div><div style="position:absolute;left:1266.0px;top:1168.5px;font-size:37px;line-height:1;font-weight:400;color:#1a1a1a;white-space:pre;transform:scaleX(1.0152);transform-origin:left top;">111-11-5</div><div style="position:absolute;left:551.0px;top:1250.5px;font-size:37px;line-height:1;font-weight:400;color:#1a1a1a;white-space:pre;transform:scaleX(0.7587);transform-origin:left top;">EC</div><div style="position:absolute;left:1266.0px;top:1254.5px;font-size:37px;line-height:1;font-weight:400;color:#1a1a1a;white-space:pre;transform:scaleX(0.9426);transform-origin:left top;">203-835-0</div><div style="position:absolute;left:551.0px;top:1367.5px;font-size:37px;line-height:1;font-weight:400;color:#1a1a1a;white-space:pre;transform:scaleX(0.9310);transform-origin:left top;">Класификация</div><div style="position:absolute;left:1404.0px;top:1369.5px;font-size:37px;line-height:1;font-weight:400;color:#444444;white-space:pre;transform:scaleX(0.8906);transform-origin:left top;">Skin Sens. 1</div><div style="position:absolute;left:1962.0px;top:1369.5px;font-size:37px;line-height:1;font-weight:400;color:#444444;white-space:pre;transform:scaleX(0.9214);transform-origin:left top;">H317</div><div style="position:absolute;left:1253.0px;top:1482.0px;font-size:37px;line-height:1;font-weight:400;color:#2A74B0;white-space:pre;transform:scaleX(0.9381);transform-origin:left top;text-decoration:underline;text-underline-offset:6px;text-decoration-thickness:2px;">ECHA страница на класификацията</div><div style="position:absolute;left:1253.0px;top:1551.5px;font-size:37px;line-height:1;font-weight:400;color:#2A74B0;white-space:pre;transform:scaleX(0.9566);transform-origin:left top;text-decoration:underline;text-underline-offset:6px;text-decoration-thickness:2px;">ECHA Информационна карта на веществото</div><div style="position:absolute;left:775.0px;top:1793.5px;font-size:37px;line-height:1;font-weight:400;color:#1a1a1a;white-space:pre;transform:scaleX(0.9622);transform-origin:left top;">други класификации</div><div style="position:absolute;left:2319.5px;top:1794.5px;font-size:37px;line-height:1;font-weight:400;color:#1a1a1a;white-space:pre;transform:scaleX(0.9369);transform-origin:left top;">Създаване на вещество</div><div style="position:absolute;left:3044.0px;top:1794.5px;font-size:37px;line-height:1;font-weight:400;color:#1a1a1a;white-space:pre;transform:scaleX(0.9522);transform-origin:left top;">Отмени</div>
</body></html>
